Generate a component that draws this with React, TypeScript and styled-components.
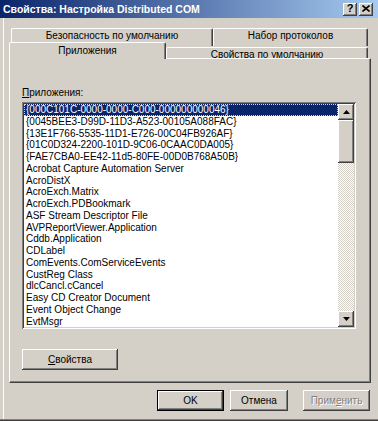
import React from 'react';
import styled, { createGlobalStyle } from 'styled-components';

const GlobalStyle = createGlobalStyle`
  html, body {
    margin: 0;
    padding: 0;
    background: #d4d0c8;
  }
  body {
    font-family: "Liberation Sans", Arial, sans-serif;
    font-size: 10px;
    color: #000;
  }
`;

const raised = `
  box-shadow: inset -1px -1px #404040, inset 1px 1px #fff,
    inset -2px -2px #808080, inset 2px 2px #d4d0c8;
`;

const Window = styled.div`
  width: 378px;
  height: 421px;
  box-sizing: border-box;
  background: #d4d0c8;
  display: flex;
  flex-direction: column;
  border-bottom: 1px solid #404040;
  box-shadow: inset 0 -1px #808080, inset 3px 0 #d4d0c8, inset 4px 0 #fff;
  overflow: hidden;
`;

const TitleBar = styled.div`
  height: 18px;
  flex: none;
  display: flex;
  align-items: center;
  padding: 0 5px 0 3px;
  background: linear-gradient(to right, #0a246a 0%, #a6caf0 100%);
`;

const Title = styled.div`
  color: #fff;
  font-weight: bold;
  font-size: 10.5px;
  white-space: nowrap;
`;

const CaptionButtons = styled.div`
  margin-left: auto;
  display: flex;
  gap: 2px;
`;

const CaptionButton = styled.div`
  width: 14px;
  height: 13px;
  box-sizing: border-box;
  background: #d4d0c8;
  ${raised}
  display: flex;
  align-items: center;
  justify-content: center;
  font-weight: bold;
  font-size: 11px;
  line-height: 1;
  padding-bottom: 1px;
`;

const Body = styled.div`
  flex: 1;
  display: flex;
  flex-direction: column;
  padding: 10px 7px 0 9px;
`;

const TabRow = styled.div<{ $indent: number; $height: number }>`
  display: flex;
  height: ${p => p.$height}px;
  padding-left: ${p => p.$indent}px;
  align-items: flex-start;
`;

const Tab = styled.div<{ $width: number; $height: number; $top?: number; $active?: boolean }>`
  width: ${p => p.$width}px;
  margin-top: ${p => p.$top ?? 0}px;
  height: ${p => p.$height}px;
  box-sizing: border-box;
  background: #d4d0c8;
  border-top: 1px solid #fff;
  border-left: 1px solid #fff;
  border-right: 1px solid #404040;
  border-radius: 2px 2px 0 0;
  box-shadow: inset -1px 0 #808080;
  text-align: center;
  line-height: 12px;
  padding-top: ${p => (p.$active ? 2 : 1)}px;
  white-space: nowrap;
  position: relative;
  z-index: ${p => (p.$active ? 2 : 0)};
`;

const Panel = styled.div`
  height: 325px;
  box-sizing: border-box;
  background: #d4d0c8;
  border-top: 1px solid #fff;
  border-left: 1px solid #fff;
  border-right: 1px solid #404040;
  border-bottom: 1px solid #404040;
  box-shadow: inset -1px -1px #808080;
  padding: 28px 14px 0 12px;
  position: relative;
  z-index: 1;
  display: flex;
  flex-direction: column;
  align-items: flex-start;
`;

const Label = styled.div`
  line-height: 12px;
  margin-bottom: 3px;
`;

const ListBox = styled.div`
  width: 334px;
  height: 227px;
  box-sizing: border-box;
  padding: 2px;
  background: #fff;
  box-shadow: inset 1px 1px #808080, inset -1px -1px #fff,
    inset 2px 2px #404040, inset -2px -2px #d4d0c8;
  display: flex;
`;

const Items = styled.div`
  flex: 1;
  overflow: hidden;
`;

const Item = styled.div<{ $selected?: boolean }>`
  height: 11.78px;
  line-height: 11.78px;
  padding-left: 2px;
  box-sizing: border-box;
  white-space: nowrap;
  background: ${p => (p.$selected ? '#0a246a' : 'transparent')};
  color: ${p => (p.$selected ? '#fff' : '#000')};
  outline: ${p => (p.$selected ? '1px dotted #f0d890' : 'none')};
  outline-offset: -1px;
`;

const ScrollBar = styled.div`
  width: 16px;
  display: flex;
  flex-direction: column;
`;

const ScrollButton = styled.div`
  height: 16px;
  flex: none;
  background: #d4d0c8;
  ${raised}
  display: flex;
  align-items: center;
  justify-content: center;
`;

const Thumb = styled.div`
  height: 43px;
  flex: none;
  background: #d4d0c8;
  ${raised}
`;

const Track = styled.div`
  flex: 1;
  background: repeating-conic-gradient(#d4d0c8 0 25%, #fff 0 50%) 0 0 / 2px 2px;
`;

const Button = styled.div<{ $width: number; $default?: boolean; $disabled?: boolean }>`
  width: ${p => p.$width}px;
  height: 21px;
  box-sizing: border-box;
  background: #d4d0c8;
  ${raised}
  border: ${p => (p.$default ? '1px solid #000' : 'none')};
  display: flex;
  align-items: center;
  justify-content: center;
  color: ${p => (p.$disabled ? '#808080' : '#000')};
  text-shadow: ${p => (p.$disabled ? '1px 1px #fff' : 'none')};
`;

const PropsButton = styled(Button)`
  margin-top: 20px;
`;

const Footer = styled.div`
  display: flex;
  padding-top: 7px;
`;

const Spacer = styled.div<{ $w: number }>`
  width: ${p => p.$w}px;
  flex: none;
`;

const Arrow = ({ down }: { down?: boolean }) => (
  <svg width="7" height="4" viewBox="0 0 7 4">
    <path d={down ? 'M0 0h7L3.5 4z' : 'M0 4h7L3.5 0z'} fill="#000" />
  </svg>
);

const items = [
  '{000C101C-0000-0000-C000-000000000046}',
  '{0045BEE3-D99D-11D3-A523-00105A088FAC}',
  '{13E1F766-5535-11D1-E726-00C04FB926AF}',
  '{01C0D324-2200-101D-9C06-0CAAC0DA005}',
  '{FAE7CBA0-EE42-11d5-80FE-00D0B768A50B}',
  'Acrobat Capture Automation Server',
  'AcroDistX',
  'AcroExch.Matrix',
  'AcroExch.PDBookmark',
  'ASF Stream Descriptor File',
  'AVPReportViewer.Application',
  'Cddb.Application',
  'CDLabel',
  'ComEvents.ComServiceEvents',
  'CustReg Class',
  'dlcCancl.cCancel',
  'Easy CD Creator Document',
  'Event Object Change',
  'EvtMsgr',
];

export default function App() {
  return (
    <>
      <GlobalStyle />
      <Window>
        <TitleBar>
          <Title>Свойства: Настройка Distributed COM</Title>
          <CaptionButtons>
            <CaptionButton>?</CaptionButton>
            <CaptionButton>
              <svg width="8" height="7" viewBox="0 0 8 7">
                <path d="M0.5 0.5l7 6M7.5 0.5l-7 6" stroke="#000" strokeWidth="1.6" />
              </svg>
            </CaptionButton>
          </CaptionButtons>
        </TitleBar>
        <Body>
          <TabRow $indent={2} $height={14}>
            <Tab $width={202} $height={18}>Безопасность по умолчанию</Tab>
            <Tab $width={155} $height={18}>Набор протоколов</Tab>
          </TabRow>
          <TabRow $indent={0} $height={16}>
            <Tab $width={157} $height={17} $active>Приложения</Tab>
            <Tab $width={202} $height={11} $top={5}>Свойства по умолчанию</Tab>
          </TabRow>
          <Panel>
            <Label><u>П</u>риложения:</Label>
            <ListBox>
              <Items>
                {items.map((t, i) => (
                  <Item key={t} $selected={i === 0}>{t}</Item>
                ))}
              </Items>
              <ScrollBar>
                <ScrollButton><Arrow /></ScrollButton>
                <Thumb />
                <Track />
                <ScrollButton><Arrow down /></ScrollButton>
              </ScrollBar>
            </ListBox>
            <PropsButton $width={96}><u>С</u>войства</PropsButton>
          </Panel>
          <Footer>
            <Spacer $w={148} />
            <Button $width={67} $default>OK</Button>
            <Spacer $w={6} />
            <Button $width={58}>Отмена</Button>
            <Spacer $w={15} />
            <Button $width={67} $disabled>Прим<u>е</u>нить</Button>
          </Footer>
        </Body>
      </Window>
    </>
  );
}
